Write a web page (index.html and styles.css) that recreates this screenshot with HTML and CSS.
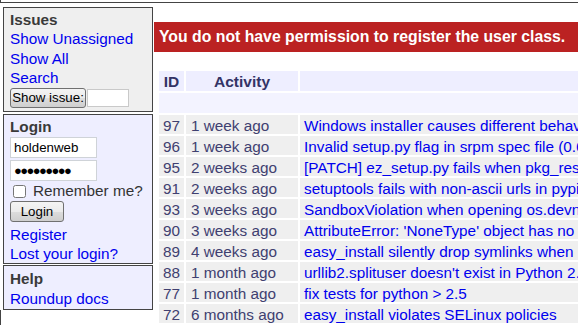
FILE: index.html
```html
<!DOCTYPE html>
<html lang="en">
<head>
    <meta charset="UTF-8">
    <title>Issue tracker</title>
    <link rel="stylesheet" href="styles.css">
</head>
<body>

<div class="page-header"></div>
<div class="page">
    <div class="sidebar">
        <div class="block classblock">
            <b class="block-title">Issues</b>
            <a href="#">Show Unassigned</a>
            <a href="#">Show All</a>
            <a href="#">Search</a>
            <div class="show-issue"><button class="btn btn-show">Show issue:</button><input type="text" class="issue-id"></div>
        </div>
        <div class="block userblock">
            <b class="block-title">Login</b>
            <input type="text" class="field field-user" value="holdenweb">
            <input type="text" class="field field-pass" value="●●●●●●●●●">
            <label class="remember"><input type="checkbox" class="check"> Remember me?</label>
            <button class="btn btn-login">Login</button>
            <a href="#" class="after-btn">Register</a>
            <a href="#">Lost your login?</a>
        </div>
        <div class="block userblock help">
            <b class="block-title">Help</b>
            <a href="#">Roundup docs</a>
        </div>
        <div class="sidebar-rest"></div>
    </div>

    <div class="content">
        <p class="error-message">You do not have permission to register the user class.</p>
        <table class="list">
            <tr>
                <th class="col-id">ID</th>
                <th class="col-activity">Activity</th>
                <th></th>
            </tr>
            <tr><td colspan="3" class="group"></td></tr>
            <tr><td>97</td><td class="activity">1 week ago</td><td><a href="#">Windows installer causes different behavior on upgrade</a></td></tr>
            <tr><td>96</td><td class="activity">1 week ago</td><td><a href="#">Invalid setup.py flag in srpm spec file (0.6c9)</a></td></tr>
            <tr><td>95</td><td class="activity">2 weeks ago</td><td><a href="#">[PATCH] ez_setup.py fails when pkg_resources is already imported</a></td></tr>
            <tr><td>91</td><td class="activity">2 weeks ago</td><td><a href="#">setuptools fails with non-ascii urls in pypi pages</a></td></tr>
            <tr><td>93</td><td class="activity">3 weeks ago</td><td><a href="#">SandboxViolation when opening os.devnull</a></td></tr>
            <tr><td>90</td><td class="activity">3 weeks ago</td><td><a href="#">AttributeError: 'NoneType' object has no attribute 'split'</a></td></tr>
            <tr><td>89</td><td class="activity">4 weeks ago</td><td><a href="#">easy_install silently drop symlinks when building eggs</a></td></tr>
            <tr><td>88</td><td class="activity">1 month ago</td><td><a href="#">urllib2.splituser doesn't exist in Python 2.3</a></td></tr>
            <tr><td>77</td><td class="activity">1 month ago</td><td><a href="#">fix tests for python &gt; 2.5</a></td></tr>
            <tr><td>72</td><td class="activity">6 months ago</td><td><a href="#">easy_install violates SELinux policies</a></td></tr>
        </table>
    </div>
</div>

</body>
</html>
```

FILE: styles.css
```css
html, body{
    margin:0;
    overflow:hidden;
}
body{
    font-family: "Liberation Sans", Arial, sans-serif;
    font-size:15.3px;
    background:#fff;
}
a{
    color:#0000ee;
    text-decoration:none;
}
.page-header{
    height:2px;
    border-left:solid 1px #444;
    border-bottom:solid 1px #444;
}
.page{
    display:flex;
    align-items:flex-start;
    overflow:hidden;
}

/* sidebar */
.sidebar{
    flex:0 0 150px;
    padding-left:3px;
    white-space:nowrap;
    position:relative;
}
.block{
    border:solid 1px #444;
    padding:2px 5px 0 6px;
    line-height:19.3px;
}
.block a{
    display:block;
}
.block-title{
    display:block;
    font-weight:700;
    color:#3a3a3a;
}
.classblock{
    margin-top:4px;
    background-color:#efefef;
    padding-bottom:3px;
}
.userblock{
    margin-top:2px;
    background-color:#eeeeff;
}
.help{
    margin-top:1px;
    padding-top:3px;
    padding-bottom:1px;
}
.sidebar-rest{
    position:absolute;
    left:0;
    top:100%;
    height:30px;
    border-left:solid 1px #444;
}
.show-issue{
    display:flex;
    align-items:center;
    height:21px;
}
.btn{
    box-sizing:border-box;
    font-family: "Liberation Sans", Arial, sans-serif;
    font-size:13.3px;
    color:#000;
    border:solid 1px #707070;
    border-radius:3px;
    background:linear-gradient(#f4f4f4, #ebebeb 50%, #dddddd 51%, #cfcfcf);
    padding:0;
    margin:0;
}
.btn-show{
    width:76px;
    height:20px;
}
.issue-id{
    box-sizing:border-box;
    width:42px;
    height:18px;
    margin:0 0 0 1px;
    border:solid 1px #c9c9c9;
    padding:0;
}
.field{
    display:block;
    box-sizing:border-box;
    width:87px;
    height:21px;
    border:solid 1px #cfd3d8;
    padding:0 0 0 3px;
    font-family: "Liberation Sans", Arial, sans-serif;
    font-size:13.3px;
    color:#000;
}
.field-user{
    margin-top:1px;
}
.field-pass{
    margin-top:2px;
    font-family: "Liberation Sans", "DejaVu Sans", sans-serif;
    font-size:13px;
    letter-spacing:-1.6px;
}
.remember{
    display:flex;
    align-items:center;
    color:#333;
    height:19.3px;
}
.check{
    width:13px;
    height:13px;
    margin:0 7px 0 3px;
}
.btn-login{
    display:block;
    width:54px;
    height:21px;
}
.after-btn{
    margin-top:3px;
}

/* content */
.content{
    flex:0 0 auto;
    margin-left:1px;
}
.error-message{
    margin:19px 0 0 0;
    padding:5px;
    background-color:#bb2222;
    color:#fff;
    font-weight:700;
    font-size:15.8px;
    line-height:20px;
    white-space:nowrap;
}
.list{
    margin:17px 0 0 3px;
    border-spacing:2px;
    white-space:nowrap;
}
.list th{
    background-color:#eeeeff;
    color:#333366;
    font-size:15.5px;
    height:20px;
    line-height:19px;
    padding:1px 0 0;
    box-sizing:border-box;
    vertical-align:top;
}
.list .col-id{
    width:25px;
}
.list .col-activity{
    width:112px;
}
.list td{
    background-color:#efefef;
    color:#404070;
    line-height:17px;
    padding:2px 4px 0;
    vertical-align:top;
}
.list td.activity{
    padding-left:5px;
}
.list td.group{
    background-color:#f3f3ff;
    height:20px;
    padding:0;
}
```
